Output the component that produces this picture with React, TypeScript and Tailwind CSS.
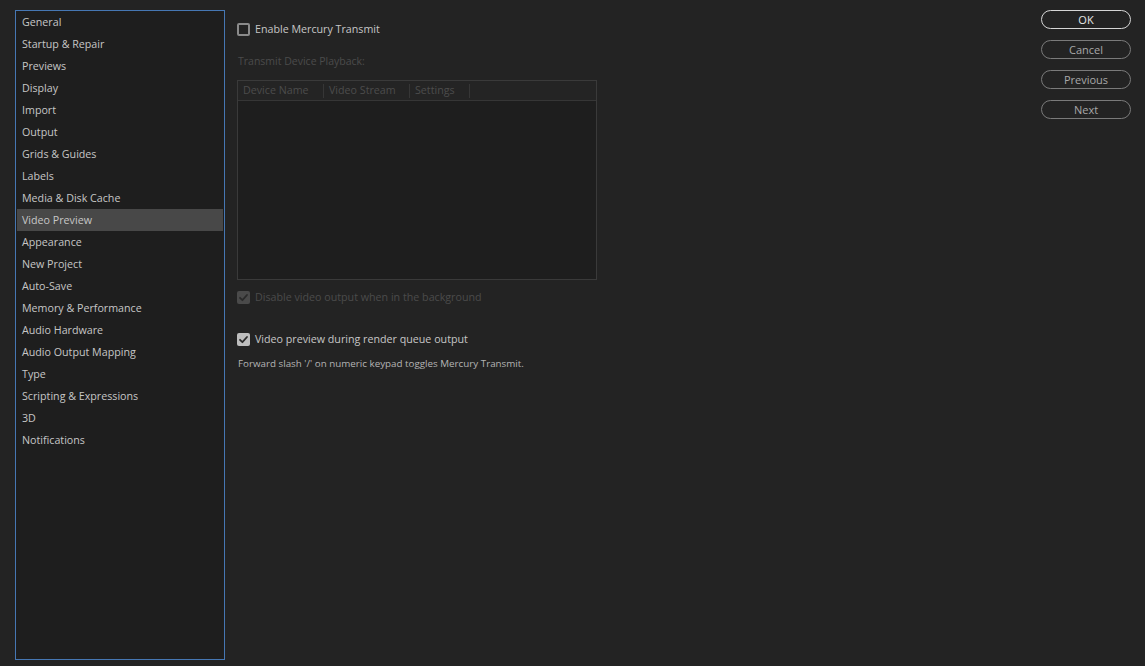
import React from 'react';

const categories = [
  'General',
  'Startup & Repair',
  'Previews',
  'Display',
  'Import',
  'Output',
  'Grids & Guides',
  'Labels',
  'Media & Disk Cache',
  'Video Preview',
  'Appearance',
  'New Project',
  'Auto-Save',
  'Memory & Performance',
  'Audio Hardware',
  'Audio Output Mapping',
  'Type',
  'Scripting & Expressions',
  '3D',
  'Notifications',
];

const Check = ({ color }: { color: string }) => (
  <svg viewBox="0 0 13 13" className="w-[13px] h-[13px]">
    <path d="M3 6.8 L5.4 9.2 L10 4" fill="none" stroke={color} strokeWidth="1.8" strokeLinecap="round" strokeLinejoin="round" />
  </svg>
);

const Checkbox = ({ checked, disabled }: { checked?: boolean; disabled?: boolean }) => {
  if (!checked) {
    return <div className="w-[13px] h-[13px] rounded-[2px] border-2 border-[#8a8a8a] box-border shrink-0" />;
  }
  return (
    <div className={`w-[13px] h-[13px] rounded-[2px] shrink-0 ${disabled ? 'bg-[#4a4a4a]' : 'bg-[#bdbdbd]'}`}>
      <Check color="#2a2a2a" />
    </div>
  );
};

const DialogButton = ({ label, primary }: { label: string; primary?: boolean }) => (
  <button
    className={`w-[90px] h-[19px] rounded-full border text-[11px] leading-none flex items-center justify-center ${
      primary ? 'border-[#d6d6d6] text-[#e6e6e6]' : 'border-[#7a7a7a] text-[#a8a8a8]'
    }`}
  >
    {label}
  </button>
);

export default function App() {
  return (
    <div
      className="w-[1145px] h-[666px] bg-[#232323] flex text-[#c6c6c6] text-[10.7px] overflow-hidden"
      style={{ fontFamily: '"Open Sans", "Noto Sans", sans-serif' }}
    >
      {/* Category list */}
      <div className="ml-[15px] mt-[10px] w-[210px] h-[650px] border border-[#4677b3] bg-[#1e1e1e] px-px">
        {categories.map((c) => (
          <div
            key={c}
            className={`h-[22px] pl-[5px] flex items-center ${c === 'Video Preview' ? 'bg-[#484848]' : ''}`}
          >
            {c}
          </div>
        ))}
      </div>

      {/* Settings pane */}
      <div className="ml-[12px] mt-[23px] w-[360px] flex flex-col">
        <div className="flex items-center gap-[5px] h-[13px]">
          <Checkbox />
          <span>Enable Mercury Transmit</span>
        </div>

        <div className="mt-[19px] text-[#4b4b4b] text-[10.5px] pl-px h-[13px] leading-[13px]">Transmit Device Playback:</div>

        <div className="mt-[12px] h-[200px] border border-[#3a3a3a] bg-[#1e1e1e] flex flex-col">
          <div className="h-[20px] border-b border-[#363636] bg-[#242424] flex items-center text-[#4c4c4c] text-[10.7px]">
            <div className="w-[86px] pl-[5px] border-r border-[#363636] h-[14px] flex items-center">Device Name</div>
            <div className="w-[86px] pl-[5px] border-r border-[#363636] h-[14px] flex items-center">Video Stream</div>
            <div className="w-[60px] pl-[5px] border-r border-[#363636] h-[14px] flex items-center">Settings</div>
          </div>
          <div className="flex-1" />
        </div>

        <div className="mt-[11px] flex items-center gap-[5px] h-[13px] text-[#4b4b4b]">
          <Checkbox checked disabled />
          <span>Disable video output when in the background</span>
        </div>

        <div className="mt-[29px] flex items-center gap-[5px] h-[13px]">
          <Checkbox checked />
          <span>Video preview during render queue output</span>
        </div>

        <div className="mt-[11px] text-[9.8px] text-[#b4b4b4] pl-px">
          Forward slash '/' on numeric keypad toggles Mercury Transmit.
        </div>
      </div>

      {/* Buttons */}
      <div className="ml-auto mr-[14px] mt-[10px] flex flex-col gap-[11px]">
        <DialogButton label="OK" primary />
        <DialogButton label="Cancel" />
        <DialogButton label="Previous" />
        <DialogButton label="Next" />
      </div>
    </div>
  );
}
